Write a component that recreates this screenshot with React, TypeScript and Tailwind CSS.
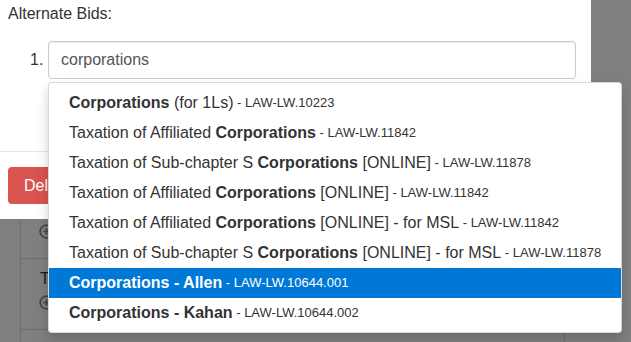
import React from "react";

const items: { parts: [string, boolean][]; code: string; active?: boolean }[] = [
  { parts: [["Corporations", true], [" (for 1Ls)", false]], code: "LAW-LW.10223" },
  { parts: [["Taxation of Affiliated ", false], ["Corporations", true]], code: "LAW-LW.11842" },
  { parts: [["Taxation of Sub-chapter S ", false], ["Corporations", true], [" [ONLINE]", false]], code: "LAW-LW.11878" },
  { parts: [["Taxation of Affiliated ", false], ["Corporations", true], [" [ONLINE]", false]], code: "LAW-LW.11842" },
  { parts: [["Taxation of Affiliated ", false], ["Corporations", true], [" [ONLINE] - for MSL", false]], code: "LAW-LW.11842" },
  { parts: [["Taxation of Sub-chapter S ", false], ["Corporations", true], [" [ONLINE] - for MSL", false]], code: "LAW-LW.11878" },
  { parts: [["Corporations - Allen", true]], code: "LAW-LW.10644.001", active: true },
  { parts: [["Corporations - Kahan", true]], code: "LAW-LW.10644.002" },
];

function PlusCircle() {
  return (
    <svg width="15" height="15" viewBox="0 0 16 16" className="block">
      <circle cx="8" cy="8" r="6.8" fill="none" stroke="#888" strokeWidth="1.8" />
      <path d="M8 4.5v7M4.5 8h7" stroke="#888" strokeWidth="1.8" />
    </svg>
  );
}

export default function App() {
  return (
    <div
      className="relative w-[631px] h-[342px] overflow-hidden bg-white text-[#333]"
      style={{ fontFamily: '"Liberation Sans", Arial, sans-serif' }}
    >
      {/* background page */}
      <div className="pt-[187px] pl-[20px]">
        <div className="w-[545px] border-l border-r border-[#ddd]">
          <div className="h-[72px] border-b border-[#ddd] pl-[19px] pt-[8px]">
            <div className="h-[23px] text-[16px] leading-[23px]">Ta</div>
            <div className="mt-[6px] -ml-[1px]"><PlusCircle /></div>
          </div>
          <div className="h-[71px] border-b border-[#ddd] pl-[19px] pt-[8px]">
            <div className="h-[23px] text-[16px] leading-[23px]">Ta</div>
            <div className="mt-[5px] -ml-[1px]"><PlusCircle /></div>
          </div>
          <div className="h-[40px]" />
        </div>
      </div>

      {/* backdrop */}
      <div className="absolute inset-0 bg-black/50" />

      {/* modal */}
      <div className="absolute left-0 top-0 w-[591px] bg-white rounded-br-[5px]">
        <div className="px-[8px] pt-[3px] text-[16px] leading-[22px]">Alternate Bids:</div>
        <div className="flex items-center mt-[16px] pl-[30px] pr-[15px]">
          <span className="text-[16px] w-[18px]">1.</span>
          <div className="flex-1 h-[38px] border border-[#ccc] rounded-[4px] shadow-[inset_0_1px_1px_rgba(0,0,0,0.075)] flex items-center pl-[12px] text-[16px] text-[#555]">
            corporations
          </div>
        </div>
        <div className="h-[72px]" />
        <div className="border-t border-[#e5e5e5] px-[8px] pt-[15px] pb-[15px]">
          <button className="h-[37px] px-[16px] rounded-[4px] bg-[#d9534f] text-white text-[16px]">
            Delete
          </button>
        </div>
      </div>

      {/* dropdown */}
      <div className="absolute left-[48px] top-[82px] w-[574px] bg-white border border-black/15 rounded-[4px] shadow-[0_6px_12px_rgba(0,0,0,0.175)] py-[4px]">
        <div className="h-[1px]" />
        {items.map((it, i) => (
          <div
            key={i}
            className={
              "h-[30px] flex items-center pl-[20px] whitespace-nowrap " +
              (it.active ? "bg-[#0078d7] text-white" : "text-[#333]")
            }
          >
            <span className="text-[16px]">
              {it.parts.map(([t, b], j) => (
                <span key={j} className={b ? "font-bold" : ""}>
                  {t}
                </span>
              ))}
            </span>
            <span className="text-[13px] whitespace-pre"> - {it.code}</span>
          </div>
        ))}
      </div>
    </div>
  );
}
